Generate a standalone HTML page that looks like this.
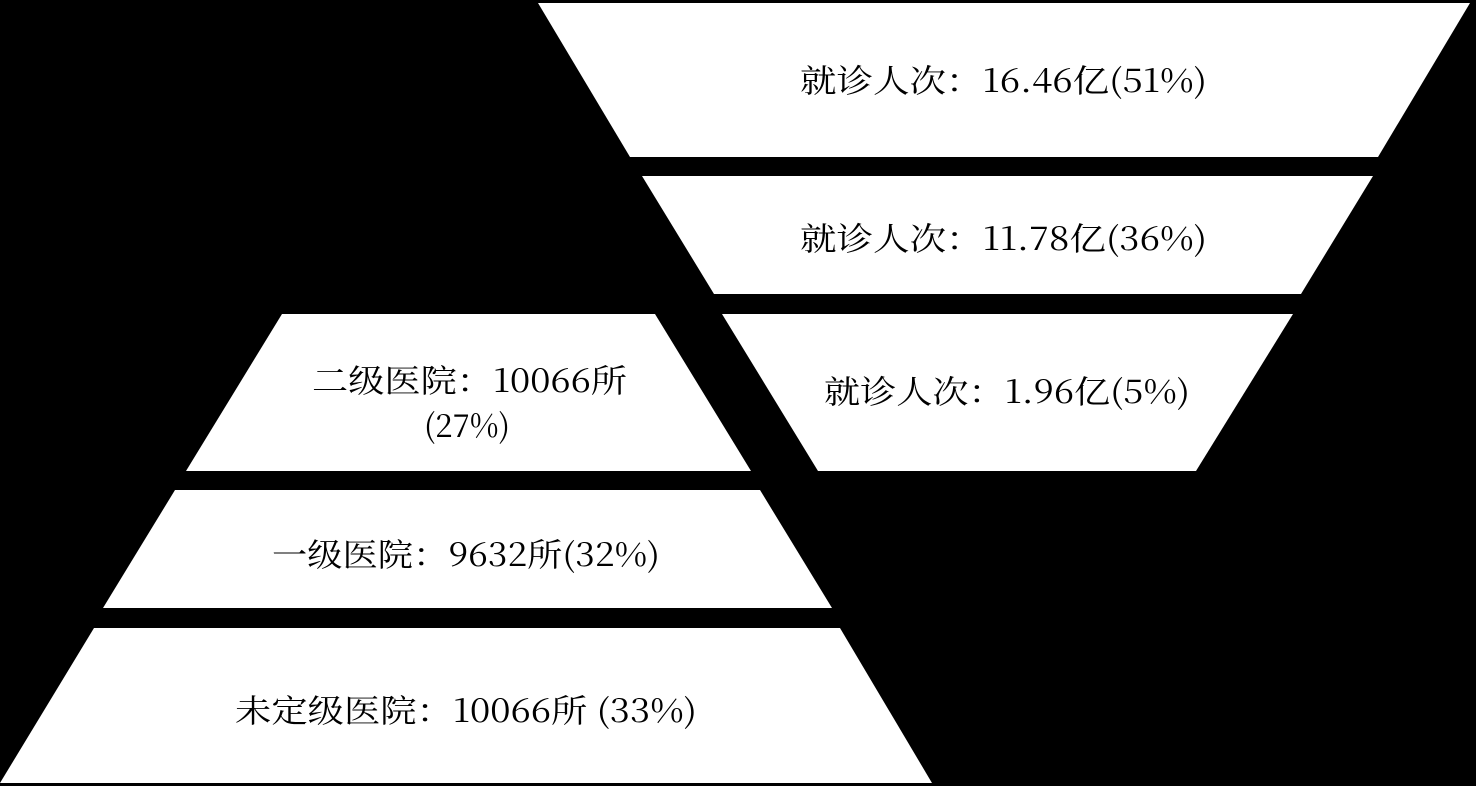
<!DOCTYPE html>
<html><head><meta charset="utf-8"><style>
html,body{margin:0;padding:0;background:#000;width:1476px;height:786px;overflow:hidden}
svg{display:block}
text{font-family:"Noto Serif CJK SC","Liberation Serif",serif;font-size:32px;fill:#000}
</style></head><body>
<svg width="1476" height="786" viewBox="0 0 1476 786">
<rect width="1476" height="786" fill="#000"/>
<g fill="#fff">
<polygon points="538,3 1470,3 1378,157 630,157"/>
<polygon points="642,176 1373,176 1301,294 714,294"/>
<polygon points="722,314 1293,314 1196,471 818,471"/>
<polygon points="282,314 655,314 751,471 186,471"/>
<polygon points="175,490 760,490 832,608 103,608"/>
<polygon points="94,628 840,628 932,783 0,783"/>
</g>
<text x="800" y="92" textLength="407" lengthAdjust="spacingAndGlyphs">就诊人次：16.46亿(51%)</text>
<text x="800" y="250" textLength="407" lengthAdjust="spacingAndGlyphs">就诊人次：11.78亿(36%)</text>
<text x="824" y="403" textLength="366" lengthAdjust="spacingAndGlyphs">就诊人次：1.96亿(5%)</text>
<text x="312" y="392" textLength="315" lengthAdjust="spacingAndGlyphs">二级医院：10066所</text>
<text x="424" y="437" textLength="86" lengthAdjust="spacingAndGlyphs">(27%)</text>
<text x="272" y="566" textLength="388" lengthAdjust="spacingAndGlyphs">一级医院：9632所(32%)</text>
<text x="235" y="722" textLength="462" lengthAdjust="spacingAndGlyphs">未定级医院：10066所 (33%)</text>
</svg>
</body></html>
